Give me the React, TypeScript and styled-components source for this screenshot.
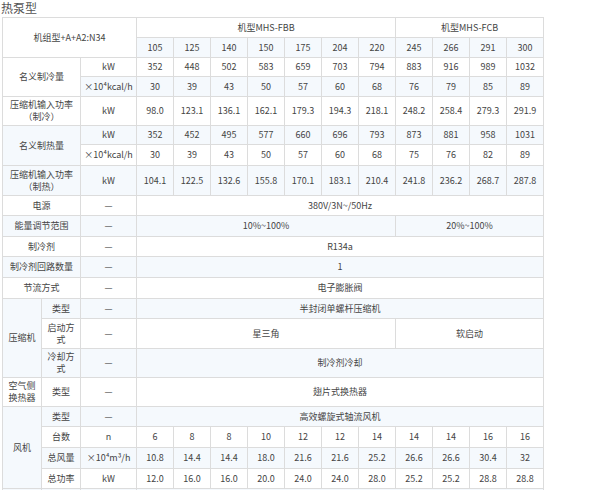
import React from "react";
import styled, { createGlobalStyle } from "styled-components";

const Global = createGlobalStyle`
  body { margin: 0; background: #fff; font-family: "Noto Sans CJK SC", "Noto Sans", sans-serif; color: #333; }
`;

const Title = styled.div`
  height: 17px;
  line-height: 15px;
  font-size: 12px;
  color: #555;
  padding-left: 1px;
`;

const Table = styled.table`
  margin-left: 2px;
  width: 541px;
  table-layout: fixed;
  border-collapse: collapse;
  font-size: 9px;
  color: #444;
  tr:nth-child(even) td { background: #f5f9fd; }
`;

const Cell = styled.td<{ $h?: number }>`
  border: 1px solid #dcdcdc;
  text-align: center;
  vertical-align: middle;
  padding: 0 2px;
  line-height: 12px;
  height: ${(p) => (p.$h ?? 20) - 1}px;
  background: #fff;
`;

const fbb = ["105", "125", "140", "150", "175", "204", "220"];
const fcb = ["245", "266", "291", "300"];

type Row = { label?: React.ReactNode; unit: string; vals: string[]; h?: number; rs?: number };

const Data = ({ unit, vals, h }: { unit: string; vals: string[]; h?: number }) => (
  <>
    <Cell $h={h}>{unit}</Cell>
    {vals.map((v, i) => (
      <Cell key={i} $h={h}>{v}</Cell>
    ))}
  </>
);

const Span = ({ h, a, b }: { h?: number; a: string; b?: string }) =>
  b ? (
    <>
      <Cell $h={h} colSpan={7}>{a}</Cell>
      <Cell $h={h} colSpan={4}>{b}</Cell>
    </>
  ) : (
    <Cell $h={h} colSpan={11}>{a}</Cell>
  );

const D = "—";

export default function App() {
  return (
    <>
      <Global />
      <Title>热泵型</Title>
      <Table>
        <colgroup>
          <col style={{ width: 39 }} />
          <col style={{ width: 39 }} />
          <col style={{ width: 56 }} />
          {Array.from({ length: 11 }).map((_, i) => (
            <col key={i} style={{ width: 37 }} />
          ))}
        </colgroup>
        <tbody>
          <tr>
            <Cell colSpan={3} rowSpan={2}>机组型+A+A2:N34</Cell>
            <Cell colSpan={7}>机型MHS-FBB</Cell>
            <Cell colSpan={4}>机型MHS-FCB</Cell>
          </tr>
          <tr>
            {[...fbb, ...fcb].map((v) => (
              <Cell key={v}>{v}</Cell>
            ))}
          </tr>
          <tr>
            <Cell colSpan={2} rowSpan={2}>名义制冷量</Cell>
            <Data unit="kW" h={19} vals={["352", "448", "502", "583", "659", "703", "794", "883", "916", "989", "1032"]} />
          </tr>
          <tr>
            <Data unit="×10⁴kcal/h" vals={["30", "39", "43", "50", "57", "60", "68", "76", "79", "85", "89"]} />
          </tr>
          <tr>
            <Cell colSpan={2} $h={29}>压缩机输入功率<br />（制冷）</Cell>
            <Data unit="kW" h={29} vals={["98.0", "123.1", "136.1", "162.1", "179.3", "194.3", "218.1", "248.2", "258.4", "279.3", "291.9"]} />
          </tr>
          <tr>
            <Cell colSpan={2} rowSpan={2}>名义制热量</Cell>
            <Data unit="kW" h={19} vals={["352", "452", "495", "577", "660", "696", "793", "873", "881", "958", "1031"]} />
          </tr>
          <tr>
            <Data unit="×10⁴kcal/h" h={21} vals={["30", "39", "43", "50", "57", "60", "68", "75", "76", "82", "89"]} />
          </tr>
          <tr>
            <Cell colSpan={2} $h={30}>压缩机输入功率<br />（制热）</Cell>
            <Data unit="kW" h={30} vals={["104.1", "122.5", "132.6", "155.8", "170.1", "183.1", "210.4", "241.8", "236.2", "268.7", "287.8"]} />
          </tr>
          <tr><Cell colSpan={2}>电源</Cell><Cell>{D}</Cell><Span a="380V/3N~/50Hz" /></tr>
          <tr><Cell colSpan={2} $h={21}>能量调节范围</Cell><Cell>{D}</Cell><Span h={21} a="10%~100%" b="20%~100%" /></tr>
          <tr><Cell colSpan={2}>制冷剂</Cell><Cell>{D}</Cell><Span a="R134a" /></tr>
          <tr><Cell colSpan={2} $h={21}>制冷剂回路数量</Cell><Cell>{D}</Cell><Span h={21} a="1" /></tr>
          <tr><Cell colSpan={2} $h={21}>节流方式</Cell><Cell>{D}</Cell><Span h={21} a="电子膨胀阀" /></tr>
          <tr>
            <Cell rowSpan={3}>压缩机</Cell>
            <Cell $h={19}>类型</Cell><Cell>{D}</Cell><Span h={19} a="半封闭单螺杆压缩机" />
          </tr>
          <tr><Cell $h={30}>启动方<br />式</Cell><Cell>{D}</Cell><Span h={30} a="星三角" b="软启动" /></tr>
          <tr><Cell $h={29}>冷却方<br />式</Cell><Cell>{D}</Cell><Span h={29} a="制冷剂冷却" /></tr>
          <tr><Cell $h={29}>空气侧<br />换热器</Cell><Cell>类型</Cell><Cell>{D}</Cell><Span h={29} a="翅片式换热器" /></tr>
          <tr>
            <Cell rowSpan={4}>风机</Cell>
            <Cell $h={19}>类型</Cell><Cell>{D}</Cell><Span h={19} a="高效螺旋式轴流风机" />
          </tr>
          <tr><Cell $h={21}>台数</Cell><Data unit="n" h={21} vals={["6", "8", "8", "10", "12", "12", "14", "14", "14", "16", "16"]} /></tr>
          <tr><Cell $h={21}>总风量</Cell><Data unit="×10⁴m³/h" h={21} vals={["10.8", "14.4", "14.4", "18.0", "21.6", "21.6", "25.2", "26.6", "26.6", "30.4", "32"]} /></tr>
          <tr><Cell>总功率</Cell><Data unit="kW" vals={["12.0", "16.0", "16.0", "20.0", "24.0", "24.0", "28.0", "25.2", "25.2", "28.8", "28.8"]} /></tr>
          <tr><Cell>&nbsp;</Cell><Cell /><Cell /><Span a="" /></tr>
        </tbody>
      </Table>
    </>
  );
}
